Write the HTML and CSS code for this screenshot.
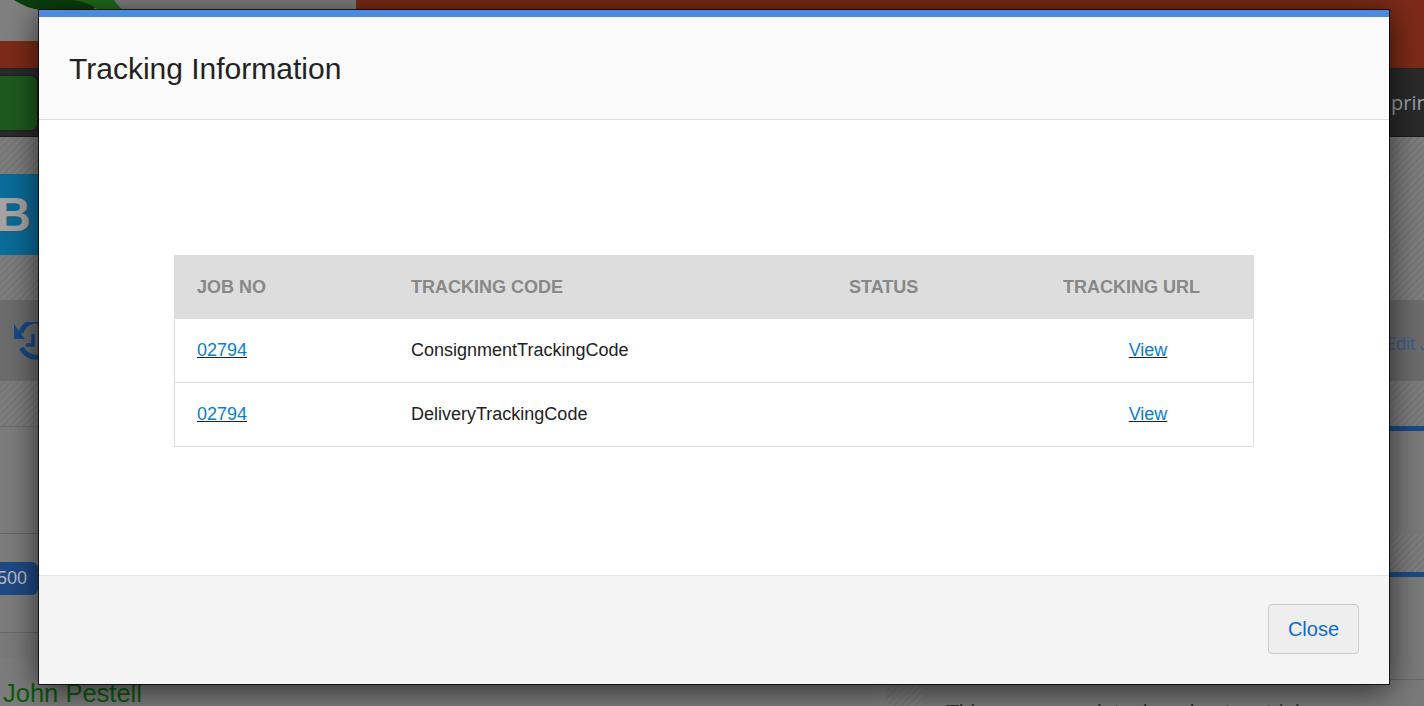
FILE: index.html
```html
<!DOCTYPE html>
<html lang="en">
<head>
<meta charset="utf-8">
<title>Tracking Information</title>
<link rel="stylesheet" href="styles.css">
</head>
<body>
<div class="page">
  <div class="top">
    <div class="top-left">
      <svg class="logo" width="110" height="10" viewBox="0 0 110 10"><path class="logo-dark" d="M0 0H92L78 10H28C16 9 8 5 0 0Z"/><path class="logo-mid" d="M58 0H100L108 10H84C80 6 72 2 58 0Z"/></svg>
    </div>
    <div class="top-right"></div>
  </div>
  <div class="redbar"></div>
  <div class="darkbar">
    <div class="green-btn"></div>
    <span class="dark-text">prin</span>
  </div>
  <div class="texture band-b">
    <div class="blue-block"><span>B</span></div>
  </div>
  <div class="greyband">
    <svg class="history" width="34" height="38" viewBox="0 0 34 38"><path class="history-line" d="M7 11A16 16 0 0 1 38 19"/><path class="history-line" d="M7.5 26A16 16 0 0 0 38 19"/><path class="history-head" d="M0 2V17H11Z"/><path class="history-line thin" d="M19 12V23H12"/></svg>
    <span class="edit">Edit J</span>
  </div>
  <div class="texture band-short"></div>
  <div class="lower">
    <div class="left-col">
      <div class="left-a"></div>
      <div class="left-b"><span class="badge">500</span></div>
      <div class="left-c"></div>
      <div class="left-d">John Pestell</div>
    </div>
    <div class="right-col">
      <div class="rule"></div>
      <div class="right-a"></div>
      <div class="texture right-tex"></div>
      <div class="rule"></div>
      <div class="right-b"></div>
      <div class="right-c">
        <div class="strip"></div>
        <div class="texture strip-tex"></div>
        <div class="panel">This page used to be about a trial</div>
      </div>
    </div>
  </div>
</div>
<div class="modal">
  <div class="modal-head"><h4 class="modal-title">Tracking Information</h4></div>
  <div class="modal-body">
    <table class="track">
      <thead>
        <tr><th class="c-job">Job No</th><th class="c-code">Tracking Code</th><th class="c-status">Status</th><th class="c-url">Tracking URL</th></tr>
      </thead>
      <tbody>
        <tr><td><a href="#">02794</a></td><td>ConsignmentTrackingCode</td><td></td><td class="center"><a href="#">View</a></td></tr>
        <tr><td><a href="#">02794</a></td><td>DeliveryTrackingCode</td><td></td><td class="center"><a href="#">View</a></td></tr>
      </tbody>
    </table>
  </div>
  <div class="modal-foot"><button class="close-btn" type="button">Close</button></div>
</div>
</body>
</html>
```
FILE: styles.css
```css
* { box-sizing: border-box; }
html, body { margin: 0; height: 100%; overflow: hidden; }
body { font-family: "Liberation Sans", Arial, sans-serif; background: #7b7b7b; }

.page { height: 706px; overflow: hidden; }

.top { display: flex; height: 41px; }
.top-left { width: 356px; background: #808080; overflow: hidden; padding-left: 14px; }
.logo { display: block; }
.logo-dark { fill: #0a3f0c; }
.logo-mid { fill: #1d6d1a; }
.top-right { flex: 1; background: #7d2b18; }
.redbar { height: 27px; background: #7d2b18; }

.darkbar { height: 69px; background: #2a2a2a; border-top: 1px solid #1c2a30; border-bottom: 1px solid #1a1a1a; display: flex; align-items: center; justify-content: space-between; }
.green-btn { width: 37px; height: 54px; background: #1e5a20; border-radius: 0 6px 6px 0; box-shadow: 0 0 2px #111; }
.dark-text { font-family: "Open Sans", sans-serif; font-size: 20px; color: #98a4a8; width: 33px; flex: none; white-space: nowrap; }

.texture { background-color: #7c7c7c; background-image: repeating-linear-gradient(135deg, rgba(255,255,255,.025) 0 2px, rgba(0,0,0,.025) 2px 5px); }
.band-b { height: 163px; padding-top: 37px; }
.blue-block { height: 81px; width: 39px; background: #0a6c98; display: flex; align-items: center; justify-content: flex-end; padding-right: 8px; overflow: hidden; }
.blue-block span { font-size: 48px; font-weight: 700; color: #a4a4a4; text-shadow: 1px 1px 1px #33586c; flex: none; }

.greyband { height: 81px; background: #6c6c6c; display: flex; align-items: center; justify-content: space-between; padding-left: 14px; }
.history { display: block; }
.history-line { fill: none; stroke: #164a86; stroke-width: 5; }
.history-line.thin { stroke-width: 3.5; }
.history-head { fill: #164a86; }
.edit { font-size: 18px; color: #3f5f8c; width: 40px; flex: none; white-space: nowrap; margin-top: 7px; }

.band-short { height: 45px; }

.lower { display: flex; height: 280px; }
.left-col { width: 871px; flex: none; }
.left-a { height: 108px; background: #7c7c7c; border-top: 1px solid #6e6e6e; border-bottom: 1px solid #666; }
.left-b { height: 99px; background: #7c7c7c; border-bottom: 1px solid #666; padding-top: 28px; }
.badge { display: flex; align-items: center; justify-content: flex-end; width: 38px; height: 33px; padding-right: 11px; background: #1f4a85; border-radius: 0 6px 6px 0; color: #bbb; font-size: 18px; }
.left-c { height: 25px; background: #7a7a7a; }
.left-d { height: 48px; background: #7c7c7c; color: #0f5a0f; font-size: 25.5px; line-height: 30px; padding: 20px 0 0 3px; white-space: nowrap; }

.right-col { flex: 1; min-width: 0; }
.rule { height: 5px; background: #1c4a86; }
.right-a { height: 103px; background: #7a7a7a; }
.right-tex { height: 38px; }
.right-b { height: 103px; background: #7a7a7a; border-bottom: 1px solid #666; }
.right-c { display: flex; height: 26px; }
.strip { width: 15px; background: #7d7d7d; }
.strip-tex { width: 36px; }
.panel { flex: 1; background: #7a7a7a; color: #2e2e2e; font-size: 21px; line-height: 24px; padding: 20px 0 0 24px; white-space: nowrap; word-spacing: 6px; overflow: hidden; }

.modal { position: absolute; left: 38px; top: 9px; width: 1352px; height: 676px; display: flex; flex-direction: column; background: #fff; border: 1px solid rgba(0,0,0,.75); background-clip: padding-box; box-shadow: 0 5px 30px rgba(0,0,0,.65); }
.modal-head { height: 110px; flex: none; background: #fafafa; border-top: 7px solid #4a8ae0; border-bottom: 1px solid #ddd; padding: 0 30px; display: flex; align-items: center; }
.modal-title { margin: 0; font-size: 30px; font-weight: 400; color: #222; line-height: 1.1; }
.modal-body { flex: 1; padding: 135px 135px 0; }
.modal-foot { height: 109px; flex: none; background: #f4f4f4; border-top: 1px solid #e5e5e5; display: flex; justify-content: flex-end; align-items: center; padding: 0 30px 2px; }
.close-btn { width: 91px; height: 50px; background: #eee; border: 1px solid #ccc; border-radius: 4px; color: #0a6bd6; font: 20px "Liberation Sans", Arial, sans-serif; padding: 0; }

.track { width: 1080px; border-collapse: separate; border-spacing: 0; table-layout: fixed; font-size: 18px; color: #222; }
.track th { background: #ddd; color: #888; font-weight: 700; text-transform: uppercase; text-align: left; height: 64px; padding: 0 0 0 23px; }
.track td { height: 64px; padding: 0 0 0 23px; border-bottom: 1px solid #ddd; }
.track tbody tr td:first-child { border-left: 1px solid #ddd; padding-left: 22px; }
.track tbody tr td:last-child { border-right: 1px solid #ddd; }
.track a { color: #0580d0; text-decoration-color: #222; }
.track td.center { text-align: center; padding: 0 0 0 3px; }
.c-job { width: 214px; }
.c-code { width: 438px; }
.c-status { width: 214px; }
.c-url { width: 214px; }
```
